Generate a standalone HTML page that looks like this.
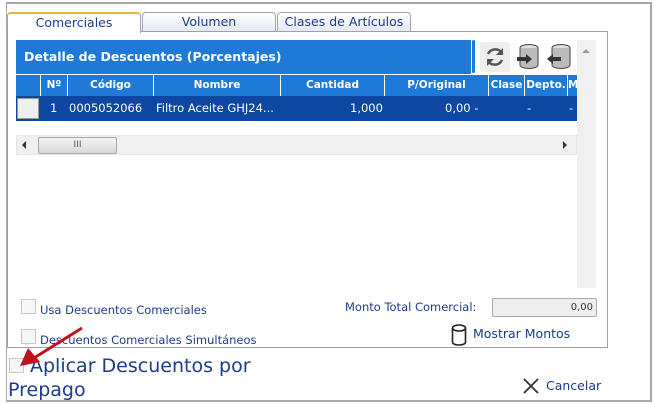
<!DOCTYPE html>
<html><head><style>
*{margin:0;padding:0;box-sizing:border-box}
body{width:654px;height:404px;background:#fff;position:relative;overflow:hidden;font-family:"DejaVu Sans","Liberation Sans",sans-serif;}
.a{position:absolute}
.tab{position:absolute;top:12px;height:20px;border:1px solid #9aa3b8;border-bottom:none;border-radius:4px 4px 0 0;background:linear-gradient(#fff,#e4e8f2);font-size:12.5px;color:#1a3c8c;text-align:center;line-height:18px}
.hd{position:absolute;top:75px;height:21px;background:#1e7ad6;color:#fff;font-weight:bold;font-size:10.5px;line-height:21px;text-align:center;border-left:1px solid #fff}
.cl{position:absolute;top:96px;height:25px;color:#fff;font-size:11.5px;line-height:25px}
.cb{position:absolute;width:15px;height:15px;border:1px solid #c8c8c8;background:#f6f6f6}
.lb{position:absolute;color:#1a3c8c;font-size:11.5px}
</style></head><body>
<div class="a" style="left:6px;top:2px;width:646px;height:400px;border:2px solid #a8a8a8;border-left-width:1px"></div>
<div class="tab" style="left:7px;width:134px;background:#fff;border-color:#e0a030 #9aa3b8 transparent #9aa3b8;border-top:2px solid #f0b030;height:21px">Comerciales</div>
<div class="tab" style="left:142px;width:134px">Volumen</div>
<div class="tab" style="left:277px;width:134px">Clases de Artículos</div>
<div class="a" style="left:7px;top:31px;width:601px;height:317px;border:1px solid #a0a0a0;border-top:none"></div>
<div class="a" style="left:140px;top:31px;width:468px;height:1px;background:#a0a0a0"></div>
<div class="a" style="left:16px;top:40px;width:455px;height:34px;background:#1e7ad6;color:#fff;font-weight:bold;font-size:12.5px;line-height:34px;padding-left:8px">Detalle de Descuentos (Porcentajes)</div>
<div class="a" style="left:472px;top:40px;width:3px;height:33px;background:#1e7ad6;border-radius:2px"></div>
<div class="a" style="left:480px;top:42px;width:30px;height:30px;background:#eee;border-radius:2px"></div>
<svg class="a" style="left:483px;top:45px" width="24" height="24" viewBox="0 0 24 24"><path d="M19 8A8 8 0 0 0 5 9M5 16a8 8 0 0 0 14-1" fill="none" stroke="#555" stroke-width="2.5"/><path d="M20 3v7h-7z M4 21v-7h7z" fill="#555"/></svg>
<svg class="a" style="left:515px;top:43px" width="26" height="28" viewBox="0 0 26 28"><ellipse cx="14" cy="5" rx="9" ry="3.5" fill="#ddd" stroke="#444"/><path d="M5 5v17c0 2 4 3.5 9 3.5s9-1.5 9-3.5V5" fill="#bbb" stroke="#444"/><path d="M2 14h9v-3l6 5-6 5v-3H2z" fill="#333"/></svg>
<svg class="a" style="left:546px;top:43px" width="26" height="28" viewBox="0 0 26 28"><ellipse cx="15" cy="5" rx="9" ry="3.5" fill="#ddd" stroke="#444"/><path d="M6 5v17c0 2 4 3.5 9 3.5s9-1.5 9-3.5V5" fill="#bbb" stroke="#444"/><path d="M15 14H7v-3l-6 5 6 5v-3h8z" fill="#333"/></svg>
<div class="hd" style="left:16px;width:24px;border-left:none"></div>
<div class="hd" style="left:40px;width:27px">Nº</div>
<div class="hd" style="left:67px;width:86px">Código</div>
<div class="hd" style="left:153px;width:127px">Nombre</div>
<div class="hd" style="left:280px;width:104px">Cantidad</div>
<div class="hd" style="left:384px;width:104px">P/Original</div>
<div class="hd" style="left:488px;width:36px">Clase</div>
<div class="hd" style="left:524px;width:43px">Depto.</div>
<div class="hd" style="left:567px;width:10px;text-align:left">M</div>
<div class="a" style="left:16px;top:96px;width:561px;height:25px;background:#0d47a1"></div>
<div class="a" style="left:17px;top:98px;width:22px;height:21px;background:#eee;border:1px solid #999"></div>
<div class="cl" style="left:50px">1</div>
<div class="cl" style="left:69px">0005052066</div>
<div class="cl" style="left:156px">Filtro Aceite GHJ24...</div>
<div class="cl" style="left:350px">1,000</div>
<div class="cl" style="left:445px">0,00 -</div>
<div class="cl" style="left:527px">-</div>
<div class="cl" style="left:569px">-</div>
<div class="a" style="left:16px;top:135px;width:561px;height:20px;background:#f0f0f0;border:1px solid #e6e6e6"></div>
<div class="a" style="left:22px;top:141px;width:0;height:0;border:4px solid transparent;border-right-color:#333;border-left:none"></div>
<div class="a" style="left:38px;top:137px;width:79px;height:17px;background:linear-gradient(#f4f4f4,#d8d8d8);border:1px solid #a8a8a8;border-radius:2px;font-size:9px;text-align:center;line-height:15px;color:#555">III</div>
<div class="a" style="left:563px;top:141px;width:0;height:0;border:4px solid transparent;border-left-color:#333;border-right:none"></div>
<div class="a" style="left:577px;top:40px;width:19px;height:248px;background:#f0f0f0"></div>
<div class="a" style="left:582px;top:49px;width:0;height:0;border:4px solid transparent;border-bottom-color:#999;border-top:none"></div>
<div class="cb" style="left:21px;top:299px"></div>
<div class="lb" style="left:40px;top:303px">Usa Descuentos Comerciales</div>
<div class="cb" style="left:21px;top:329px"></div>
<div class="lb" style="left:40px;top:333px">Descuentos Comerciales Simultáneos</div>
<div class="lb" style="left:345px;top:300px">Monto Total Comercial:</div>
<div class="a" style="left:492px;top:298px;width:105px;height:19px;background:#eee;border:1px solid #aaa;border-radius:2px;font-size:10px;text-align:right;padding-right:3px;line-height:17px;color:#333">0,00</div>
<svg class="a" style="left:451px;top:324px" width="16" height="23" viewBox="0 0 16 23"><ellipse cx="8" cy="4" rx="6.5" ry="3" fill="none" stroke="#222" stroke-width="1.6"/><path d="M1.5 4v14c0 2 3 3 6.5 3s6.5-1 6.5-3V4" fill="none" stroke="#222" stroke-width="1.6"/></svg>
<div class="lb" style="left:473px;top:326px;font-size:12.5px">Mostrar Montos</div>
<div class="cb" style="left:9px;top:358px"></div>
<div class="lb" style="left:30px;top:354px;font-size:19px;line-height:24px">Aplicar Descuentos por</div>
<div class="lb" style="left:8px;top:378px;font-size:19px;line-height:24px">Prepago</div>
<svg class="a" style="left:16px;top:324px" width="70" height="44" viewBox="0 0 70 44"><line x1="66" y1="4" x2="18" y2="34" stroke="#c0141c" stroke-width="3"/><path d="M4 42l8-18 12 14z" fill="#c0141c"/></svg>
<svg class="a" style="left:522px;top:377px" width="18" height="18" viewBox="0 0 18 18"><path d="M2 2l14 14M16 2L2 16" stroke="#333" stroke-width="1.8"/></svg>
<div class="lb" style="left:546px;top:378px;font-size:12.5px">Cancelar</div>
</body></html>
